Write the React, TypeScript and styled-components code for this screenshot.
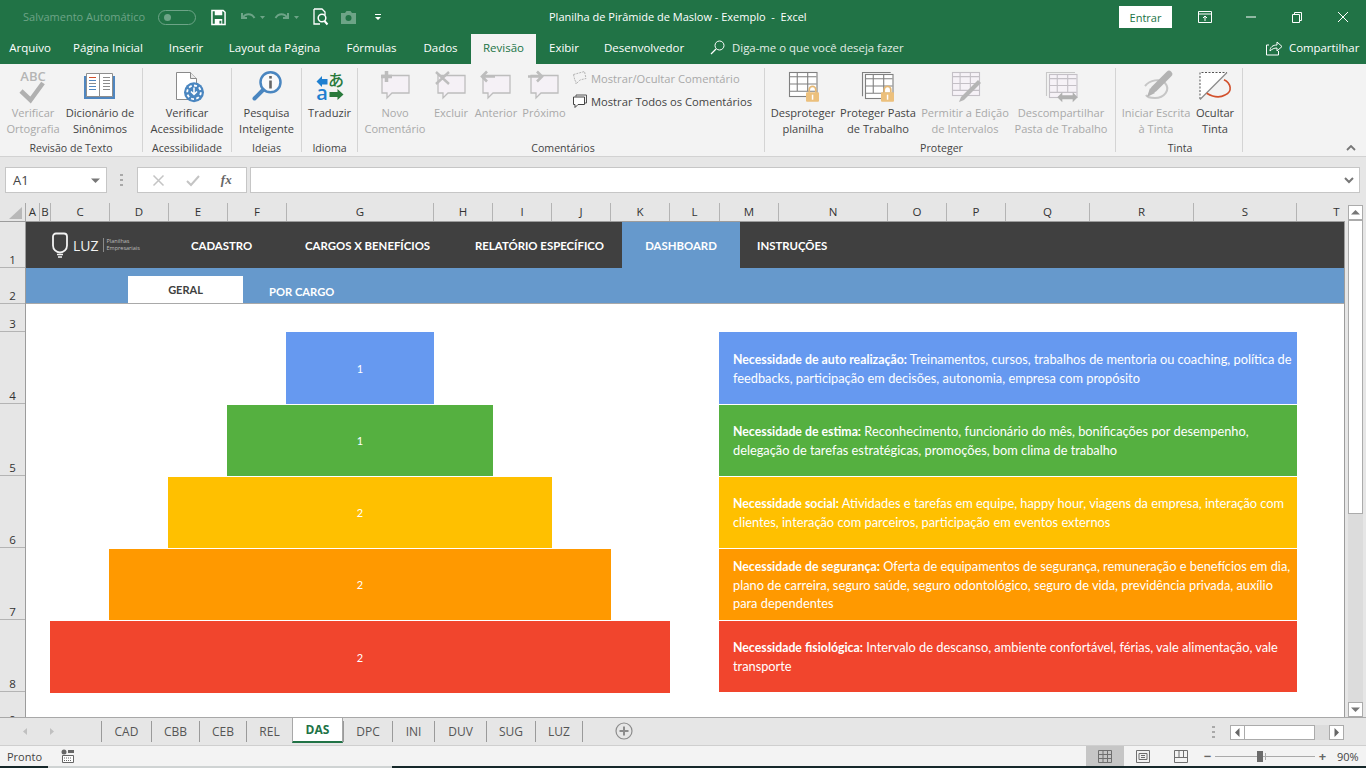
import React from 'react';
import styled, { createGlobalStyle } from 'styled-components';

const UI_FONT = '"Open Sans", "Noto Sans", "Liberation Sans", sans-serif';
const CELL_FONT = 'Lato, "Open Sans", "Liberation Sans", sans-serif';
const GREEN = '#217346';
const DISABLED = '#a9a9a9';
const LABEL = '#444444';

const GlobalStyle = createGlobalStyle`
  html, body { margin: 0; padding: 0; background: #e6e6e6; }
  * { box-sizing: border-box; }
`;

const Shell = styled.div`
  width: 1366px;
  height: 768px;
  display: flex;
  flex-direction: column;
  overflow: hidden;
  font-family: ${UI_FONT};
  background: #e6e6e6;
`;

/* title bar */
const TitleBar = styled.header`
  height: 34px;
  flex: none;
  display: flex;
  align-items: center;
  background: ${GREEN};
  color: #fff;
`;

const QuickAccess = styled.div`
  width: 549px;
  flex: none;
  display: flex;
  align-items: center;
  padding-left: 23px;
`;

const AutoSave = styled.span`
  width: 135px;
  font-size: 11px;
  padding-bottom: 1px;
  color: #6da487;
  white-space: nowrap;
`;

const Toggle = styled.span`
  width: 38px;
  height: 15px;
  border: 1px solid #6da487;
  border-radius: 8px;
  display: flex;
  align-items: center;
  padding-left: 5px;
  margin-right: 15px;

  &::before {
    content: '';
    width: 7px;
    height: 7px;
    border-radius: 50%;
    background: #6da487;
  }
`;

const QuickIcon = styled.svg<{ $w: number; $gap?: number }>`
  display: block;
  width: ${({ $w }) => $w}px;
  height: 18px;
  margin-right: ${({ $gap }) => $gap ?? 0}px;
  flex: none;
`;

const DocTitle = styled.div`
  flex: 1;
  font-size: 11px;
  padding-bottom: 2px;
  white-space: pre;
`;

const EnterButton = styled.button`
  width: 53px;
  height: 22px;
  border: 0;
  padding: 0;
  background: #fff;
  color: ${GREEN};
  font: 11px ${UI_FONT};
  margin-right: 10px;
`;

const WindowButton = styled.div`
  width: 46px;
  height: 34px;
  display: flex;
  align-items: center;
  justify-content: center;
`;

/* ribbon tabs */
const TabRow = styled.nav`
  height: 30px;
  flex: none;
  display: flex;
  background: ${GREEN};
`;

const RibbonTab = styled.div<{ $w: number; $active?: boolean }>`
  width: ${({ $w }) => $w}px;
  display: flex;
  align-items: center;
  justify-content: center;
  padding-bottom: 3px;
  font-size: 11.5px;
  white-space: nowrap;
  color: ${({ $active }) => ($active ? GREEN : '#fff')};
  background: ${({ $active }) => ($active ? '#f3f3f3' : 'transparent')};
`;

const TellMe = styled.div`
  display: flex;
  align-items: center;
  gap: 7px;
  margin-left: 14px;
  width: 556px;
  padding-bottom: 3px;
  font-size: 11.4px;
  color: #e4eee8;
`;

const ShareBox = styled.div`
  display: flex;
  align-items: center;
  gap: 6px;
  padding-bottom: 3px;
  font-size: 11.4px;
  color: #fff;
`;

/* ribbon */
const Ribbon = styled.section`
  height: 93px;
  flex: none;
  display: flex;
  padding-top: 4px;
  background: #f3f3f3;
  border-bottom: 1px solid #d2d2d2;
  position: relative;
`;

const Group = styled.div<{ $w: number; $pad?: number }>`
  width: ${({ $w }) => $w}px;
  height: 84px;
  flex: none;
  display: flex;
  flex-direction: column;
  padding-left: ${({ $pad }) => $pad ?? 0}px;
  border-right: 1px solid #d4d4d4;
`;

const GroupItems = styled.div`
  height: 72px;
  display: flex;
`;

const GroupTitle = styled.div`
  height: 12px;
  line-height: 16px;
  text-align: center;
  font-size: 10.6px;
  color: ${LABEL};
  white-space: nowrap;
`;

const RibbonButton = styled.div<{ $w: number; $off?: boolean }>`
  width: ${({ $w }) => $w}px;
  flex: none;
  display: flex;
  flex-direction: column;
  align-items: center;
  color: ${({ $off }) => ($off ? DISABLED : LABEL)};
`;

const RibbonIcon = styled.svg`
  display: block;
  width: 40px;
  height: 37px;
  flex: none;
`;

const RibbonLabel = styled.div`
  font-size: 11.1px;
  line-height: 16px;
  text-align: center;
  white-space: nowrap;
`;

const SmallStack = styled.div`
  display: flex;
  flex-direction: column;
  gap: 3px;
  padding: 0 0 0 3px;
`;

const SmallItem = styled.div<{ $off?: boolean }>`
  height: 20px;
  display: flex;
  align-items: center;
  gap: 4px;
  font-size: 11.2px;
  white-space: nowrap;
  color: ${({ $off }) => ($off ? DISABLED : LABEL)};
`;

const CollapseCaret = styled.svg`
  position: absolute;
  right: 10px;
  bottom: 5px;
  width: 10px;
  height: 6px;
`;

/* formula bar */
const FormulaRow = styled.div`
  height: 46px;
  flex: none;
  display: flex;
  align-items: flex-start;
  padding: 10px 6px 0 5px;
`;

const BoxBase = styled.div`
  height: 26px;
  background: #fff;
  border: 1px solid #c6c6c6;
  display: flex;
  align-items: center;
`;

const NameBox = styled(BoxBase)`
  width: 102px;
  justify-content: space-between;
  padding: 0 6px 0 7px;
  font-size: 13px;
  color: #444;
`;

const Grip = styled.div`
  width: 30px;
  height: 26px;
  display: flex;
  align-items: center;
  justify-content: center;
`;

const FxBox = styled(BoxBase)`
  width: 110px;
  justify-content: space-around;
  padding: 0 4px;
  margin-right: 3px;
`;

const FormulaInput = styled(BoxBase)`
  flex: 1;
  justify-content: flex-end;
  padding-right: 5px;
`;

const FxGlyph = styled.span`
  font: italic 700 13px "Liberation Serif", serif;
  color: #666;
`;

/* worksheet */
const WorkArea = styled.div`
  height: 514px;
  flex: none;
  display: flex;
`;

const SheetColumn = styled.div`
  width: 1345px;
  flex: none;
  display: flex;
  flex-direction: column;
`;

const ColumnHeader = styled.div`
  height: 19px;
  flex: none;
  display: flex;
  overflow: hidden;
  border-bottom: 1px solid #9c9c9c;
`;

const Corner = styled.div`
  width: 26px;
  flex: none;
  display: flex;
  align-items: flex-end;
  justify-content: flex-end;
  padding: 0 3px 2px 0;
  border-right: 1px solid #a8a8a8;
`;

const ColLabel = styled.div<{ $w: number }>`
  width: ${({ $w }) => $w}px;
  flex: none;
  text-align: center;
  font-size: 11.5px;
  line-height: 18px;
  color: #333;
  border-right: 1px solid #b4b4b4;
`;

const SheetBody = styled.div`
  flex: 1;
  display: flex;
  min-height: 0;
`;

const RowHeader = styled.div`
  width: 26px;
  flex: none;
  overflow: hidden;
  border-right: 1px solid #9c9c9c;
`;

const RowLabel = styled.div<{ $h: number }>`
  height: ${({ $h }) => $h}px;
  display: flex;
  align-items: flex-end;
  justify-content: center;
  font-size: 11.5px;
  line-height: 15px;
  color: #333;
  border-bottom: 1px solid #b4b4b4;
`;

const Canvas = styled.main`
  flex: 1;
  display: flex;
  flex-direction: column;
  min-width: 0;
  background: #fff;
  border-right: 1px solid #9c9c9c;
  font-family: ${CELL_FONT};
`;

const TopNav = styled.div`
  height: 46px;
  flex: none;
  display: flex;
  align-items: stretch;
  background: #404040;
  padding-left: 26px;
`;

const Logo = styled.div`
  width: 139px;
  flex: none;
  display: flex;
  align-items: center;
  color: #f2f2f2;
`;

const LogoWord = styled.span`
  font: 400 14px "Open Sans", sans-serif;
  margin: 0 4px 0 5px;
`;

const LogoTag = styled.span`
  border-left: 1px solid #8a8a8a;
  padding-left: 3px;
  font: 5.5px/7px "Open Sans", sans-serif;
  color: #bdbdbd;
  white-space: nowrap;
`;

const NavItem = styled.div<{ $w?: number; $pad?: number; $active?: boolean }>`
  width: ${({ $w }) => ($w ? `${$w}px` : 'auto')};
  flex: none;
  display: flex;
  align-items: center;
  justify-content: ${({ $active }) => ($active ? 'center' : 'flex-start')};
  padding-left: ${({ $pad }) => $pad ?? 0}px;
  background: ${({ $active }) => ($active ? '#6699cc' : 'transparent')};
  font-size: 11.4px;
  font-weight: 700;
  color: #fff;
  white-space: nowrap;
`;

const SubNav = styled.div`
  height: 36px;
  flex: none;
  display: flex;
  align-items: flex-end;
  padding-left: 102px;
  background: #6699cc;
  border-bottom: 1px solid #a9a9a9;
`;

const SubTab = styled.div<{ $active?: boolean }>`
  height: 27px;
  width: ${({ $active }) => ($active ? '115px' : 'auto')};
  margin-left: ${({ $active }) => ($active ? 0 : 26)}px;
  display: flex;
  align-items: center;
  justify-content: center;
  padding-top: ${({ $active }) => ($active ? 0 : 4)}px;
  background: ${({ $active }) => ($active ? '#fff' : 'transparent')};
  color: ${({ $active }) => ($active ? '#404040' : '#fff')};
  font-size: ${({ $active }) => ($active ? 11 : 11.2)}px;
  font-weight: 700;
`;

const ContentRow = styled.div`
  flex: 1;
  display: flex;
  padding: 28px 0 0 24px;
  min-height: 0;
`;

const Pyramid = styled.div`
  width: 620px;
  flex: none;
  display: flex;
  flex-direction: column;
  align-items: center;
  gap: 1px;
`;

const PyramidStep = styled.div<{ $w: number; $color: string }>`
  width: ${({ $w }) => $w}px;
  height: 71px;
  flex: none;
  display: flex;
  align-items: center;
  justify-content: center;
  background: ${({ $color }) => $color};
  color: #fff;
  font-size: 11px;

  &:first-child, &:last-child {
    height: 72px;
  }
`;

const InfoList = styled.div`
  width: 578px;
  margin-left: 49px;
  flex: none;
  display: flex;
  flex-direction: column;
  gap: 1px;
`;

const InfoCard = styled.div<{ $color: string }>`
  height: 71px;
  flex: none;
  display: flex;
  align-items: center;
  padding-left: 14px;
  background: ${({ $color }) => $color};
  color: #fff;
  font-size: 12.8px;
  line-height: 18px;
  white-space: nowrap;

  &:first-child {
    height: 72px;
  }

  strong {
    font-size: 12.3px;
  }
`;

/* scrollbars */
const VScroll = styled.div`
  width: 21px;
  flex: none;
  display: flex;
  flex-direction: column;
  padding: 2px 3px 0;
`;

const ScrollButton = styled.div<{ $h?: number }>`
  width: 15px;
  height: ${({ $h }) => $h ?? 15}px;
  flex: none;
  display: flex;
  align-items: center;
  justify-content: center;
  background: #fff;
  border: 1px solid #ababab;
`;

const ScrollTrack = styled.div`
  flex: 1;
  background: #dcdcdc;
`;

/* sheet tabs */
const SheetTabs = styled.div`
  height: 29px;
  flex: none;
  display: flex;
  align-items: flex-start;
  padding-top: 3px;
  border-top: 1px solid #a8a8a8;
  border-bottom: 1px solid #cfcfcf;
`;

const TabArrows = styled.div`
  width: 101px;
  height: 21px;
  flex: none;
  display: flex;
  align-items: center;
  gap: 17px;
  padding-left: 21px;
`;

const SheetTab = styled.div<{ $w: number; $active?: boolean }>`
  width: ${({ $w }) => $w}px;
  height: ${({ $active }) => ($active ? 25 : 21)}px;
  margin-top: ${({ $active }) => ($active ? -3 : 0)}px;
  flex: none;
  display: flex;
  align-items: center;
  justify-content: center;
  font-size: 12px;
  font-weight: ${({ $active }) => ($active ? 700 : 400)};
  color: ${({ $active }) => ($active ? GREEN : '#555')};
  background: ${({ $active }) => ($active ? '#fff' : 'transparent')};
  border-left: 1px solid ${({ $active }) => ($active ? '#a8a8a8' : '#9a9a9a')};
  border-right: ${({ $active }) => ($active ? '1px solid #a8a8a8' : '0')};
  border-bottom: ${({ $active }) => ($active ? `2px solid ${GREEN}` : '0')};
`;

const TabsEnd = styled.div`
  width: 1px;
  height: 21px;
  background: #9a9a9a;
`;

const AddSheet = styled.svg`
  width: 18px;
  height: 18px;
  margin: 1px 0 0 32px;
`;

const HScroll = styled.div`
  margin-left: auto;
  margin-right: 22px;
  display: flex;
  align-items: center;
  height: 16px;
  margin-top: 3px;
`;

const GripDots = styled.svg<{ $gap?: number }>`
  width: 4px;
  height: 12px;
  margin-right: ${({ $gap }) => $gap ?? 0}px;
`;

const HThumb = styled.div`
  width: 70px;
  height: 15px;
  background: #fff;
  border: 1px solid #ababab;
  border-left: 0;
`;

const HTrack = styled.div`
  width: 14px;
  height: 15px;
  background: #dcdcdc;
`;

/* status bar */
const StatusBar = styled.footer`
  height: 20px;
  flex: none;
  display: flex;
  align-items: center;
  padding-left: 7px;
  background: #f3f3f3;
  font-size: 11px;
  color: #444;
`;

const StatusMacro = styled.svg`
  width: 14px;
  height: 14px;
  margin-left: 19px;
`;

const ViewGroup = styled.div`
  margin-left: auto;
  display: flex;
  height: 100%;
`;

const ViewButton = styled.div<{ $active?: boolean }>`
  width: 38px;
  display: flex;
  align-items: center;
  justify-content: center;
  background: ${({ $active }) => ($active ? '#c6c6c6' : 'transparent')};
`;

const ZoomBlock = styled.div`
  width: 166px;
  display: flex;
  align-items: center;
  padding-left: 3px;
`;

const ZoomSign = styled.span`
  width: 9px;
  text-align: center;
  font-size: 13px;
  font-weight: 700;
  line-height: 14px;
  color: #666;
`;

const ZoomTrack = styled.div`
  width: 100px;
  height: 1px;
  margin: 0 3px;
  background: #aaaaaa;
  position: relative;

  &::after {
    content: '';
    position: absolute;
    left: 50px;
    top: -3px;
    width: 1px;
    height: 7px;
    background: #aaaaaa;
  }
`;

const ZoomThumb = styled.span`
  position: absolute;
  left: 42px;
  top: -5px;
  width: 6px;
  height: 11px;
  background: #6b6b6b;
`;

const ZoomValue = styled.span`
  margin-left: 10px;
  font-size: 11px;
`;

const TaskStrip = styled.div`
  height: 2px;
  flex: none;
  display: flex;
  background: #16282a;

  &::before {
    content: '';
    width: 344px;
    margin-left: 48px;
    background: #cfd3d3;
  }
`;

/* icon drawings */
const Bubble = () => (
  <path d="M7 7.500h27v17.500h-17l-5 5v-5h-5z" fill="#f5f1f6" stroke="#bdbdbd" strokeWidth="1.300" />
);

const CommentIcon = ({ children }: { children: React.ReactNode }) => (
  <RibbonIcon viewBox="0 0 40 37">
    <Bubble />
    {children}
  </RibbonIcon>
);

const Grid = ({ x, y, w, h, stroke, fill }: { x: number; y: number; w: number; h: number; stroke: string; fill: string }) => (
  <g fill="none" stroke={stroke} strokeWidth="1.100">
    <rect x={x + 0.5} y={y + 0.5} width={w} height={h} fill={fill} />
    <path
      d={`M${x + w * 0.3} ${y}v${h * 0.8}M${x + w * 0.68} ${y}v${h * 0.8}M${x} ${y + h * 0.2}h${w}M${x} ${y + h * 0.5}h${w}M${x} ${y + h * 0.8}h${w}`}
    />
  </g>
);

const Lock = ({ x, y }: { x: number; y: number }) => (
  <g>
    <path d={`M${x + 3.2} ${y + 7}v-3a3.300 3.300 0 0 1 6.600 0v3`} fill="none" stroke="#e6b873" strokeWidth="1.700" />
    <rect x={x} y={y + 6.500} width="13" height="9.500" rx="1" fill="#ecc07c" />
    <rect x={x + 5.800} y={y + 9} width="1.500" height="5" fill="#fff" />
  </g>
);

const SpellingIcon = () => (
  <RibbonIcon viewBox="0 0 40 37">
    <text x="20" y="12.500" textAnchor="middle" fontFamily='"Open Sans", sans-serif' fontSize="13" fontWeight="600" fill="#b5b5b5">
      ABC
    </text>
    <path d="M8 23l9.500 9L30 15" fill="none" stroke="#b0b0b0" strokeWidth="4.500" />
  </RibbonIcon>
);

const ThesaurusIcon = () => (
  <RibbonIcon viewBox="0 0 40 37">
    <rect x="4" y="8" width="31" height="23" fill="#4f86c0" />
    <path d="M6.500 5.500h13v23h-13zM19.500 5.500h13v23h-13z" fill="#fff" stroke="#8e8e8e" strokeWidth="1" />
    <path d="M9 9.500h7" stroke="#d2502c" strokeWidth="1" />
    <path d="M9 12.500h7M9 18.500h7M9 21.500h7" stroke="#4f86c0" strokeWidth="1" />
    <path d="M9 15.500h7" stroke="#8c8c8c" strokeWidth="1" />
    <path d="M23 9.500h7M23 12.500h7M23 15.500h7M23 18.500h7M23 21.500h7" stroke="#8c8c8c" strokeWidth="1" />
  </RibbonIcon>
);

const AccessibilityIcon = () => (
  <RibbonIcon viewBox="0 0 40 37">
    <path d="M9.500 4.500h14l6 6v21h-20z" fill="#fff" stroke="#8a8a8a" />
    <path d="M23.500 4.500v6h6" fill="#e9e9e9" stroke="#8a8a8a" />
    <circle cx="27" cy="24.300" r="10" fill="#4a86c0" />
    <circle cx="27" cy="24.300" r="6.800" fill="none" stroke="#fff" strokeWidth="1.800" strokeDasharray="3 2.300" />
    <path d="M27 19.500v6.500M24 23.500l3 3 3-3" fill="none" stroke="#fff" strokeWidth="1.500" />
  </RibbonIcon>
);

const SmartLookupIcon = () => (
  <RibbonIcon viewBox="0 0 40 37">
    <circle cx="23.500" cy="14.300" r="10" fill="#fafafa" stroke="#4a86c0" strokeWidth="2.500" />
    <path d="M16 22l-8.500 8.500" stroke="#4a86c0" strokeWidth="4" strokeLinecap="round" />
    <rect x="22.200" y="12.500" width="2.600" height="8" fill="#666" />
    <rect x="22.200" y="8" width="2.600" height="2.600" fill="#666" />
  </RibbonIcon>
);

const TranslateIcon = () => (
  <RibbonIcon viewBox="0 0 40 37">
    <text x="26" y="18" textAnchor="middle" fontFamily='"Noto Sans CJK JP", sans-serif' fontSize="16" fontWeight="500" fill="#2a7a3c">
      あ
    </text>
    <text x="12" y="32" textAnchor="middle" fontFamily='"Open Sans", sans-serif' fontSize="20" fontWeight="600" fill="#1e7fd0">
      a
    </text>
    <path d="M6.500 13.500L12 8v3h5.500v5.500H12V19z" fill="#1e7fd0" />
    <path d="M33.500 26.500L27.500 32v-3h-8v-5h8v-3z" fill="#2a7a3c" />
  </RibbonIcon>
);

const InkStartIcon = () => (
  <RibbonIcon viewBox="0 0 40 37">
    <path d="M9 18c5-6 15-8 20-3 6 7-1 15-10 15-4 0-8-1-9-3" fill="none" stroke="#c6c6c6" strokeWidth="2" />
    <path d="M33 6L18 21" stroke="#b3b3b3" strokeWidth="6.500" strokeLinecap="round" />
    <path d="M14 20l5 5-8 4z" fill="#b3b3b3" />
  </RibbonIcon>
);

const InkHideIcon = () => (
  <RibbonIcon viewBox="0 0 40 37">
    <path d="M5 31V4.500h27L5 31z" fill="#fff" />
    <path d="M5 31V4.500h27" fill="none" stroke="#555" strokeWidth="1" strokeDasharray="2 1.500" />
    <path d="M32 4.500L5 31.500" stroke="#8a8a8a" strokeWidth="1.300" />
    <path d="M29 11.700C36 15 38 24 30 27c-5 3-12 2-18.300-1.700" fill="none" stroke="#d2502c" strokeWidth="1.600" />
  </RibbonIcon>
);

const DotGrip = ({ gap }: { gap?: number }) => (
  <GripDots $gap={gap} viewBox="0 0 4 12">
    <path d="M0 0h3v2H0zM0 5h3v2H0zM0 10h3v2H0z" fill="#a9a9a9" />
  </GripDots>
);

const Tri = ({ d, size = 9, color = '#666' }: { d: string; size?: number; color?: string }) => (
  <svg width={size} height={size} viewBox="0 0 9 9">
    <path d={d} fill={color} />
  </svg>
);

const ribbonTabs = [
  { label: 'Arquivo', w: 60 },
  { label: 'Página Inicial', w: 96 },
  { label: 'Inserir', w: 60 },
  { label: 'Layout da Página', w: 117 },
  { label: 'Fórmulas', w: 77 },
  { label: 'Dados', w: 61 },
  { label: 'Revisão', w: 65, active: true },
  { label: 'Exibir', w: 56 },
  { label: 'Desenvolvedor', w: 104 },
];

const columns = [
  ['A', 14], ['B', 11], ['C', 59], ['D', 59], ['E', 59], ['F', 59], ['G', 147], ['H', 59], ['I', 59], ['J', 59],
  ['K', 59], ['L', 50], ['M', 59], ['N', 109], ['O', 59], ['P', 59], ['Q', 84], ['R', 104], ['S', 103], ['T', 80],
] as const;

const rowHeights = [46, 36, 28, 72, 72, 72, 72, 72, 36];

const steps = [
  { value: 1, w: 148, color: '#6699f0' },
  { value: 1, w: 266, color: '#55b040' },
  { value: 2, w: 384, color: '#ffc000' },
  { value: 2, w: 502, color: '#ff9900' },
  { value: 2, w: 620, color: '#f1452d' },
];

const needs = [
  {
    color: '#6699f0',
    title: 'Necessidade de auto realização:',
    lines: [' Treinamentos, cursos, trabalhos de mentoria ou coaching, política de', 'feedbacks, participação em decisões, autonomia, empresa com propósito'],
  },
  {
    color: '#55b040',
    title: 'Necessidade de estima:',
    lines: [' Reconhecimento, funcionário do mês, bonificações por desempenho,', 'delegação de tarefas estratégicas, promoções, bom clima de trabalho'],
  },
  {
    color: '#ffc000',
    title: 'Necessidade social:',
    lines: [' Atividades e tarefas em equipe, happy hour, viagens da empresa, interação com', 'clientes, interação com parceiros, participação em eventos externos'],
  },
  {
    color: '#ff9900',
    title: 'Necessidade de segurança:',
    lines: [' Oferta de equipamentos de segurança, remuneração e benefícios em dia,', 'plano de carreira, seguro saúde, seguro odontológico, seguro de vida, previdência privada, auxílio', 'para dependentes'],
  },
  {
    color: '#f1452d',
    title: 'Necessidade fisiológica:',
    lines: [' Intervalo de descanso, ambiente confortável, férias, vale alimentação, vale', 'transporte'],
  },
];

const sheetTabs = [
  ['CAD', 50], ['CBB', 48], ['CEB', 47], ['REL', 46], ['DAS', 51], ['DPC', 49], ['INI', 42], ['DUV', 52], ['SUG', 49], ['LUZ', 47],
] as const;

export default function App() {
  return (
    <Shell>
      <GlobalStyle />

      <TitleBar>
        <QuickAccess>
          <AutoSave>Salvamento Automático</AutoSave>
          <Toggle />
          <QuickIcon $w={15} $gap={14} viewBox="0 0 16 18">
            <path d="M1 2h12l2 2v13H1z" fill="none" stroke="#fff" strokeWidth="1.600" />
            <path d="M4 2h8v5H4zM4 11h8v6H4z" fill="#fff" />
            <rect x="9" y="13" width="2" height="3" fill={GREEN} />
          </QuickIcon>
          <QuickIcon $w={16} $gap={3} viewBox="0 0 16 18">
            <path d="M2 5v5h5M2.500 10c3-5 9-5 12 0" fill="none" stroke="#6da487" strokeWidth="2" />
          </QuickIcon>
          <QuickIcon $w={8} $gap={7} viewBox="0 0 8 18">
            <path d="M1 8h5l-2.500 3z" fill="#6da487" />
          </QuickIcon>
          <QuickIcon $w={16} $gap={3} viewBox="0 0 16 18">
            <path d="M14 5v5H9M13.500 10c-3-5-9-5-12 0" fill="none" stroke="#6da487" strokeWidth="2" />
          </QuickIcon>
          <QuickIcon $w={8} $gap={12} viewBox="0 0 8 18">
            <path d="M1 8h5l-2.500 3z" fill="#6da487" />
          </QuickIcon>
          <QuickIcon $w={16} $gap={11} viewBox="0 0 16 18">
            <path d="M1 1h8l3 3v3M1 1v15h6" fill="none" stroke="#fff" strokeWidth="1.300" />
            <circle cx="9" cy="10" r="3.800" fill="none" stroke="#fff" strokeWidth="1.500" />
            <path d="M11.500 13l3 3.500" stroke="#fff" strokeWidth="2" />
          </QuickIcon>
          <QuickIcon $w={17} $gap={18} viewBox="0 0 17 18">
            <path d="M1 5h4l1.500-2h4L12 5h4v11H1z" fill="#6da487" />
            <circle cx="8.500" cy="10" r="3" fill={GREEN} />
          </QuickIcon>
          <QuickIcon $w={6} viewBox="0 0 6 18">
            <path d="M0 6h6v1H0zM0 9h6l-3 3z" fill="#fff" />
          </QuickIcon>
        </QuickAccess>
        <DocTitle>Planilha de Pirâmide de Maslow - Exemplo  -  Excel</DocTitle>
        <EnterButton>Entrar</EnterButton>
        <WindowButton>
          <svg width="14" height="12" viewBox="0 0 14 12">
            <path d="M.5.500h13v11H.5zM.5 3h13" fill="none" stroke="#fff" />
            <path d="M7 10V5M5 7l2-2 2 2" fill="none" stroke="#fff" />
          </svg>
        </WindowButton>
        <WindowButton>
          <svg width="10" height="2" viewBox="0 0 10 2">
            <path d="M0 1h10" stroke="#fff" />
          </svg>
        </WindowButton>
        <WindowButton>
          <svg width="10" height="11" viewBox="0 0 10 11">
            <path d="M.5 2.500h7v8h-7zM2.500 2.500v-2h7v8h-2" fill="none" stroke="#fff" />
          </svg>
        </WindowButton>
        <WindowButton>
          <svg width="10" height="10" viewBox="0 0 10 10">
            <path d="M0 0l10 10M10 0L0 10" stroke="#fff" />
          </svg>
        </WindowButton>
      </TitleBar>

      <TabRow>
        {ribbonTabs.map((tab) => (
          <RibbonTab key={tab.label} $w={tab.w} $active={tab.active}>
            {tab.label}
          </RibbonTab>
        ))}
        <TellMe>
          <svg width="15" height="15" viewBox="0 0 15 15">
            <circle cx="9.500" cy="5.500" r="4.500" fill="none" stroke="#fff" />
            <path d="M6 9l-5 5" stroke="#fff" strokeWidth="1.200" />
          </svg>
          Diga-me o que você deseja fazer
        </TellMe>
        <ShareBox>
          <svg width="17" height="16" viewBox="0 0 17 16">
            <path d="M3 5H.5v10h12v-4" fill="none" stroke="#fff" />
            <path d="M4 11c0-4 3-6 7-6V2l5 4.500L11 11V8c-3 0-5 1-7 3z" fill="none" stroke="#fff" />
          </svg>
          Compartilhar
        </ShareBox>
      </TabRow>

      <Ribbon>
        <Group $w={143}>
          <GroupItems>
            <RibbonButton $w={66} $off>
              <SpellingIcon />
              <RibbonLabel>Verificar<br />Ortografia</RibbonLabel>
            </RibbonButton>
            <RibbonButton $w={68}>
              <ThesaurusIcon />
              <RibbonLabel>Dicionário de<br />Sinônimos</RibbonLabel>
            </RibbonButton>
          </GroupItems>
          <GroupTitle>Revisão de Texto</GroupTitle>
        </Group>
        <Group $w={89}>
          <GroupItems>
            <RibbonButton $w={88}>
              <AccessibilityIcon />
              <RibbonLabel>Verificar<br />Acessibilidade</RibbonLabel>
            </RibbonButton>
          </GroupItems>
          <GroupTitle>Acessibilidade</GroupTitle>
        </Group>
        <Group $w={70}>
          <GroupItems>
            <RibbonButton $w={69}>
              <SmartLookupIcon />
              <RibbonLabel>Pesquisa<br />Inteligente</RibbonLabel>
            </RibbonButton>
          </GroupItems>
          <GroupTitle>Ideias</GroupTitle>
        </Group>
        <Group $w={56}>
          <GroupItems>
            <RibbonButton $w={55}>
              <TranslateIcon />
              <RibbonLabel>Traduzir</RibbonLabel>
            </RibbonButton>
          </GroupItems>
          <GroupTitle>Idioma</GroupTitle>
        </Group>
        <Group $w={407} $pad={4}>
          <GroupItems>
            <RibbonButton $w={66} $off>
              <CommentIcon>
                <path d="M11.500 3v11M6 8.500h11" stroke="#bdbdbd" strokeWidth="3.500" />
              </CommentIcon>
              <RibbonLabel>Novo<br />Comentário</RibbonLabel>
            </RibbonButton>
            <RibbonButton $w={46} $off>
              <CommentIcon>
                <path d="M5 4l13 12M18 4L5 16" stroke="#bdbdbd" strokeWidth="2.400" />
              </CommentIcon>
              <RibbonLabel>Excluir</RibbonLabel>
            </RibbonButton>
            <RibbonButton $w={44} $off>
              <CommentIcon>
                <path d="M19 8.500H8M11 3.500l-5 5 5 5" fill="none" stroke="#bdbdbd" strokeWidth="2.600" />
              </CommentIcon>
              <RibbonLabel>Anterior</RibbonLabel>
            </RibbonButton>
            <RibbonButton $w={52} $off>
              <CommentIcon>
                <path d="M4 8.500h12M13 3.500l5 5-5 5" fill="none" stroke="#bdbdbd" strokeWidth="2.600" />
              </CommentIcon>
              <RibbonLabel>Próximo</RibbonLabel>
            </RibbonButton>
            <SmallStack>
              <SmallItem $off>
                <svg width="14" height="14" viewBox="0 0 14 14">
                  <path d="M.5 3.500l11-3 1.500 7-6 1.500-4 4v-3H2z" fill="none" stroke="#b5b5b5" strokeDasharray="2 1" />
                </svg>
                Mostrar/Ocultar Comentário
              </SmallItem>
              <SmallItem>
                <svg width="14" height="14" viewBox="0 0 14 14">
                  <path d="M3 2.500V1h10.500v8H12" fill="none" stroke="#555" />
                  <path d="M.5 3h11v7.500H5l-3 3v-3H.5z" fill="#fff" stroke="#444" />
                </svg>
                Mostrar Todos os Comentários
              </SmallItem>
            </SmallStack>
          </GroupItems>
          <GroupTitle>Comentários</GroupTitle>
        </Group>
        <Group $w={351} $pad={3}>
          <GroupItems>
            <RibbonButton $w={70}>
              <RibbonIcon viewBox="0 0 40 37">
                <Grid x={6} y={4} w={27.500} h={24} stroke="#808080" fill="#fff" />
                <Lock x={23} y={17.700} />
              </RibbonIcon>
              <RibbonLabel>Desproteger<br />planilha</RibbonLabel>
            </RibbonButton>
            <RibbonButton $w={80}>
              <RibbonIcon viewBox="0 0 40 37">
                <path d="M4.500 28.300V4.500h28.200" fill="none" stroke="#808080" strokeWidth="1.100" />
                <Grid x={7} y={6} w={27.500} h={24} stroke="#808080" fill="#fff" />
                <Lock x={23} y={17.700} />
              </RibbonIcon>
              <RibbonLabel>Proteger Pasta<br />de Trabalho</RibbonLabel>
            </RibbonButton>
            <RibbonButton $w={94} $off>
              <RibbonIcon viewBox="0 0 40 37">
                <Grid x={7} y={4} w={27} h={23} stroke="#c4c0c6" fill="#f6f2f7" />
                <path d="M33 12l3 3-17 17-5 2 2-5z" fill="#b5b5b5" />
              </RibbonIcon>
              <RibbonLabel>Permitir a Edição<br />de Intervalos</RibbonLabel>
            </RibbonButton>
            <RibbonButton $w={98} $off>
              <RibbonIcon viewBox="0 0 40 37">
                <path d="M5.500 28V4.500H34" fill="none" stroke="#c8c8c8" strokeWidth="1.100" />
                <Grid x={8} y={6} w={27.500} h={23} stroke="#c4c0c6" fill="#f6f2f7" />
                <path d="M16.300 29.300l5-5v3h10.400v-3l5 5-5 5v-3H21.300v3z" fill="#b0b0b0" />
              </RibbonIcon>
              <RibbonLabel>Descompartilhar<br />Pasta de Trabalho</RibbonLabel>
            </RibbonButton>
          </GroupItems>
          <GroupTitle>Proteger</GroupTitle>
        </Group>
        <Group $w={127} $pad={2}>
          <GroupItems>
            <RibbonButton $w={76} $off>
              <InkStartIcon />
              <RibbonLabel>Iniciar Escrita<br />à Tinta</RibbonLabel>
            </RibbonButton>
            <RibbonButton $w={42}>
              <InkHideIcon />
              <RibbonLabel>Ocultar<br />Tinta</RibbonLabel>
            </RibbonButton>
          </GroupItems>
          <GroupTitle>Tinta</GroupTitle>
        </Group>
        <CollapseCaret viewBox="0 0 10 6">
          <path d="M1 5l4-4 4 4" fill="none" stroke="#777" strokeWidth="1.800" />
        </CollapseCaret>
      </Ribbon>

      <FormulaRow>
        <NameBox>
          A1
          <Tri d="M0 2.500h9L4.500 7z" color="#777" />
        </NameBox>
        <Grip>
          <DotGrip />
        </Grip>
        <FxBox>
          <svg width="13" height="13" viewBox="0 0 13 13">
            <path d="M1.500 1.500l10 10M11.500 1.500l-10 10" stroke="#c4c4c4" strokeWidth="1.500" />
          </svg>
          <svg width="14" height="13" viewBox="0 0 14 13">
            <path d="M1 7l4 4 8-9" fill="none" stroke="#c4c4c4" strokeWidth="2" />
          </svg>
          <FxGlyph>fx</FxGlyph>
        </FxBox>
        <FormulaInput>
          <svg width="10" height="7" viewBox="0 0 10 7">
            <path d="M1 1l4 4 4-4" fill="none" stroke="#777" strokeWidth="2" />
          </svg>
        </FormulaInput>
      </FormulaRow>

      <WorkArea>
        <SheetColumn>
          <ColumnHeader>
            <Corner>
              <svg width="13" height="12" viewBox="0 0 13 12">
                <path d="M13 0v12H0z" fill="#b8b8b8" />
              </svg>
            </Corner>
            {columns.map(([letter, w]) => (
              <ColLabel key={letter} $w={w}>
                {letter}
              </ColLabel>
            ))}
          </ColumnHeader>
          <SheetBody>
            <RowHeader>
              {rowHeights.map((h, i) => (
                <RowLabel key={i} $h={h}>
                  {i + 1}
                </RowLabel>
              ))}
            </RowHeader>
            <Canvas>
              <TopNav>
                <Logo>
                  <svg width="16" height="26" viewBox="0 0 16 26">
                    <path d="M4 1.500h8a3 3 0 0 1 3 3v9a7 7 0 0 1-7 7 7 7 0 0 1-7-7v-9a3 3 0 0 1 3-3z" fill="none" stroke="#f2f2f2" strokeWidth="1.800" />
                    <path d="M5 22.500h6M6 25h4" stroke="#f2f2f2" strokeWidth="1.300" />
                  </svg>
                  <LogoWord>LUZ</LogoWord>
                  <LogoTag>Planilhas<br />Empresariais</LogoTag>
                </Logo>
                <NavItem $w={114}>CADASTRO</NavItem>
                <NavItem $w={170}>CARGOS X BENEFÍCIOS</NavItem>
                <NavItem $w={147}>RELATÓRIO ESPECÍFICO</NavItem>
                <NavItem $w={118} $active>DASHBOARD</NavItem>
                <NavItem $pad={17}>INSTRUÇÕES</NavItem>
              </TopNav>
              <SubNav>
                <SubTab $active>GERAL</SubTab>
                <SubTab>POR CARGO</SubTab>
              </SubNav>
              <ContentRow>
                <Pyramid>
                  {steps.map((step, i) => (
                    <PyramidStep key={i} $w={step.w} $color={step.color}>
                      {step.value}
                    </PyramidStep>
                  ))}
                </Pyramid>
                <InfoList>
                  {needs.map((need) => (
                    <InfoCard key={need.title} $color={need.color}>
                      <div>
                        <strong>{need.title}</strong>
                        {need.lines.map((line, i) => (
                          <React.Fragment key={i}>
                            {i > 0 && <br />}
                            {line}
                          </React.Fragment>
                        ))}
                      </div>
                    </InfoCard>
                  ))}
                </InfoList>
              </ContentRow>
            </Canvas>
          </SheetBody>
        </SheetColumn>
        <VScroll>
          <ScrollButton>
            <Tri d="M0 6.500h9L4.500 2z" color="#777" />
          </ScrollButton>
          <ScrollButton $h={294} />
          <ScrollTrack />
          <ScrollButton>
            <Tri d="M0 2.500h9L4.500 7z" color="#777" />
          </ScrollButton>
        </VScroll>
      </WorkArea>

      <SheetTabs>
        <TabArrows>
          <Tri d="M6 1v7L2 4.500z" color="#c0c0c0" />
          <Tri d="M3 1v7l4-3.500z" color="#c0c0c0" />
        </TabArrows>
        {sheetTabs.map(([name, w]) => (
          <SheetTab key={name} $w={w} $active={name === 'DAS'}>
            {name}
          </SheetTab>
        ))}
        <TabsEnd />
        <AddSheet viewBox="0 0 18 18">
          <circle cx="9" cy="9" r="8" fill="none" stroke="#8c8c8c" strokeWidth="1.200" />
          <path d="M9 4.500v9M4.500 9h9" stroke="#8c8c8c" strokeWidth="2" />
        </AddSheet>
        <HScroll>
          <DotGrip gap={14} />
          <ScrollButton>
            <Tri d="M6.500 0v9L2 4.500z" color="#666" />
          </ScrollButton>
          <HThumb />
          <HTrack />
          <ScrollButton>
            <Tri d="M2.500 0v9L7 4.500z" color="#666" />
          </ScrollButton>
        </HScroll>
      </SheetTabs>

      <StatusBar>
        Pronto
        <StatusMacro viewBox="0 0 14 14">
          <circle cx="3" cy="3" r="2.500" fill="#666" />
          <path d="M7 1h6v3H7z" fill="#666" />
          <path d="M1.500 6.500h11v7h-11z" fill="#fff" stroke="#666" />
          <path d="M3 9h8M3 11.500h8" stroke="#666" strokeDasharray="1 1" />
        </StatusMacro>
        <ViewGroup>
          <ViewButton $active>
            <svg width="14" height="13" viewBox="0 0 14 13">
              <path d="M.5.500h13v12H.5zM5 .5v12M9.500.5v12M.5 4.500h13M.5 8.500h13" fill="none" stroke="#6f6f6f" />
            </svg>
          </ViewButton>
          <ViewButton>
            <svg width="14" height="13" viewBox="0 0 14 13">
              <path d="M.5.500h13v12H.5z" fill="none" stroke="#6f6f6f" />
              <path d="M3 3.500h8v6H3zM5 5.500h4M5 7.500h4" fill="none" stroke="#6f6f6f" />
            </svg>
          </ViewButton>
          <ViewButton>
            <svg width="14" height="13" viewBox="0 0 14 13">
              <path d="M.5.500h13v12H.5zM.5 7.500h13M5 .5v7M9.500.5v7" fill="none" stroke="#6f6f6f" />
            </svg>
          </ViewButton>
        </ViewGroup>
        <ZoomBlock>
          <ZoomSign>−</ZoomSign>
          <ZoomTrack>
            <ZoomThumb />
          </ZoomTrack>
          <ZoomSign>+</ZoomSign>
          <ZoomValue>90%</ZoomValue>
        </ZoomBlock>
      </StatusBar>
      <TaskStrip />
    </Shell>
  );
}
